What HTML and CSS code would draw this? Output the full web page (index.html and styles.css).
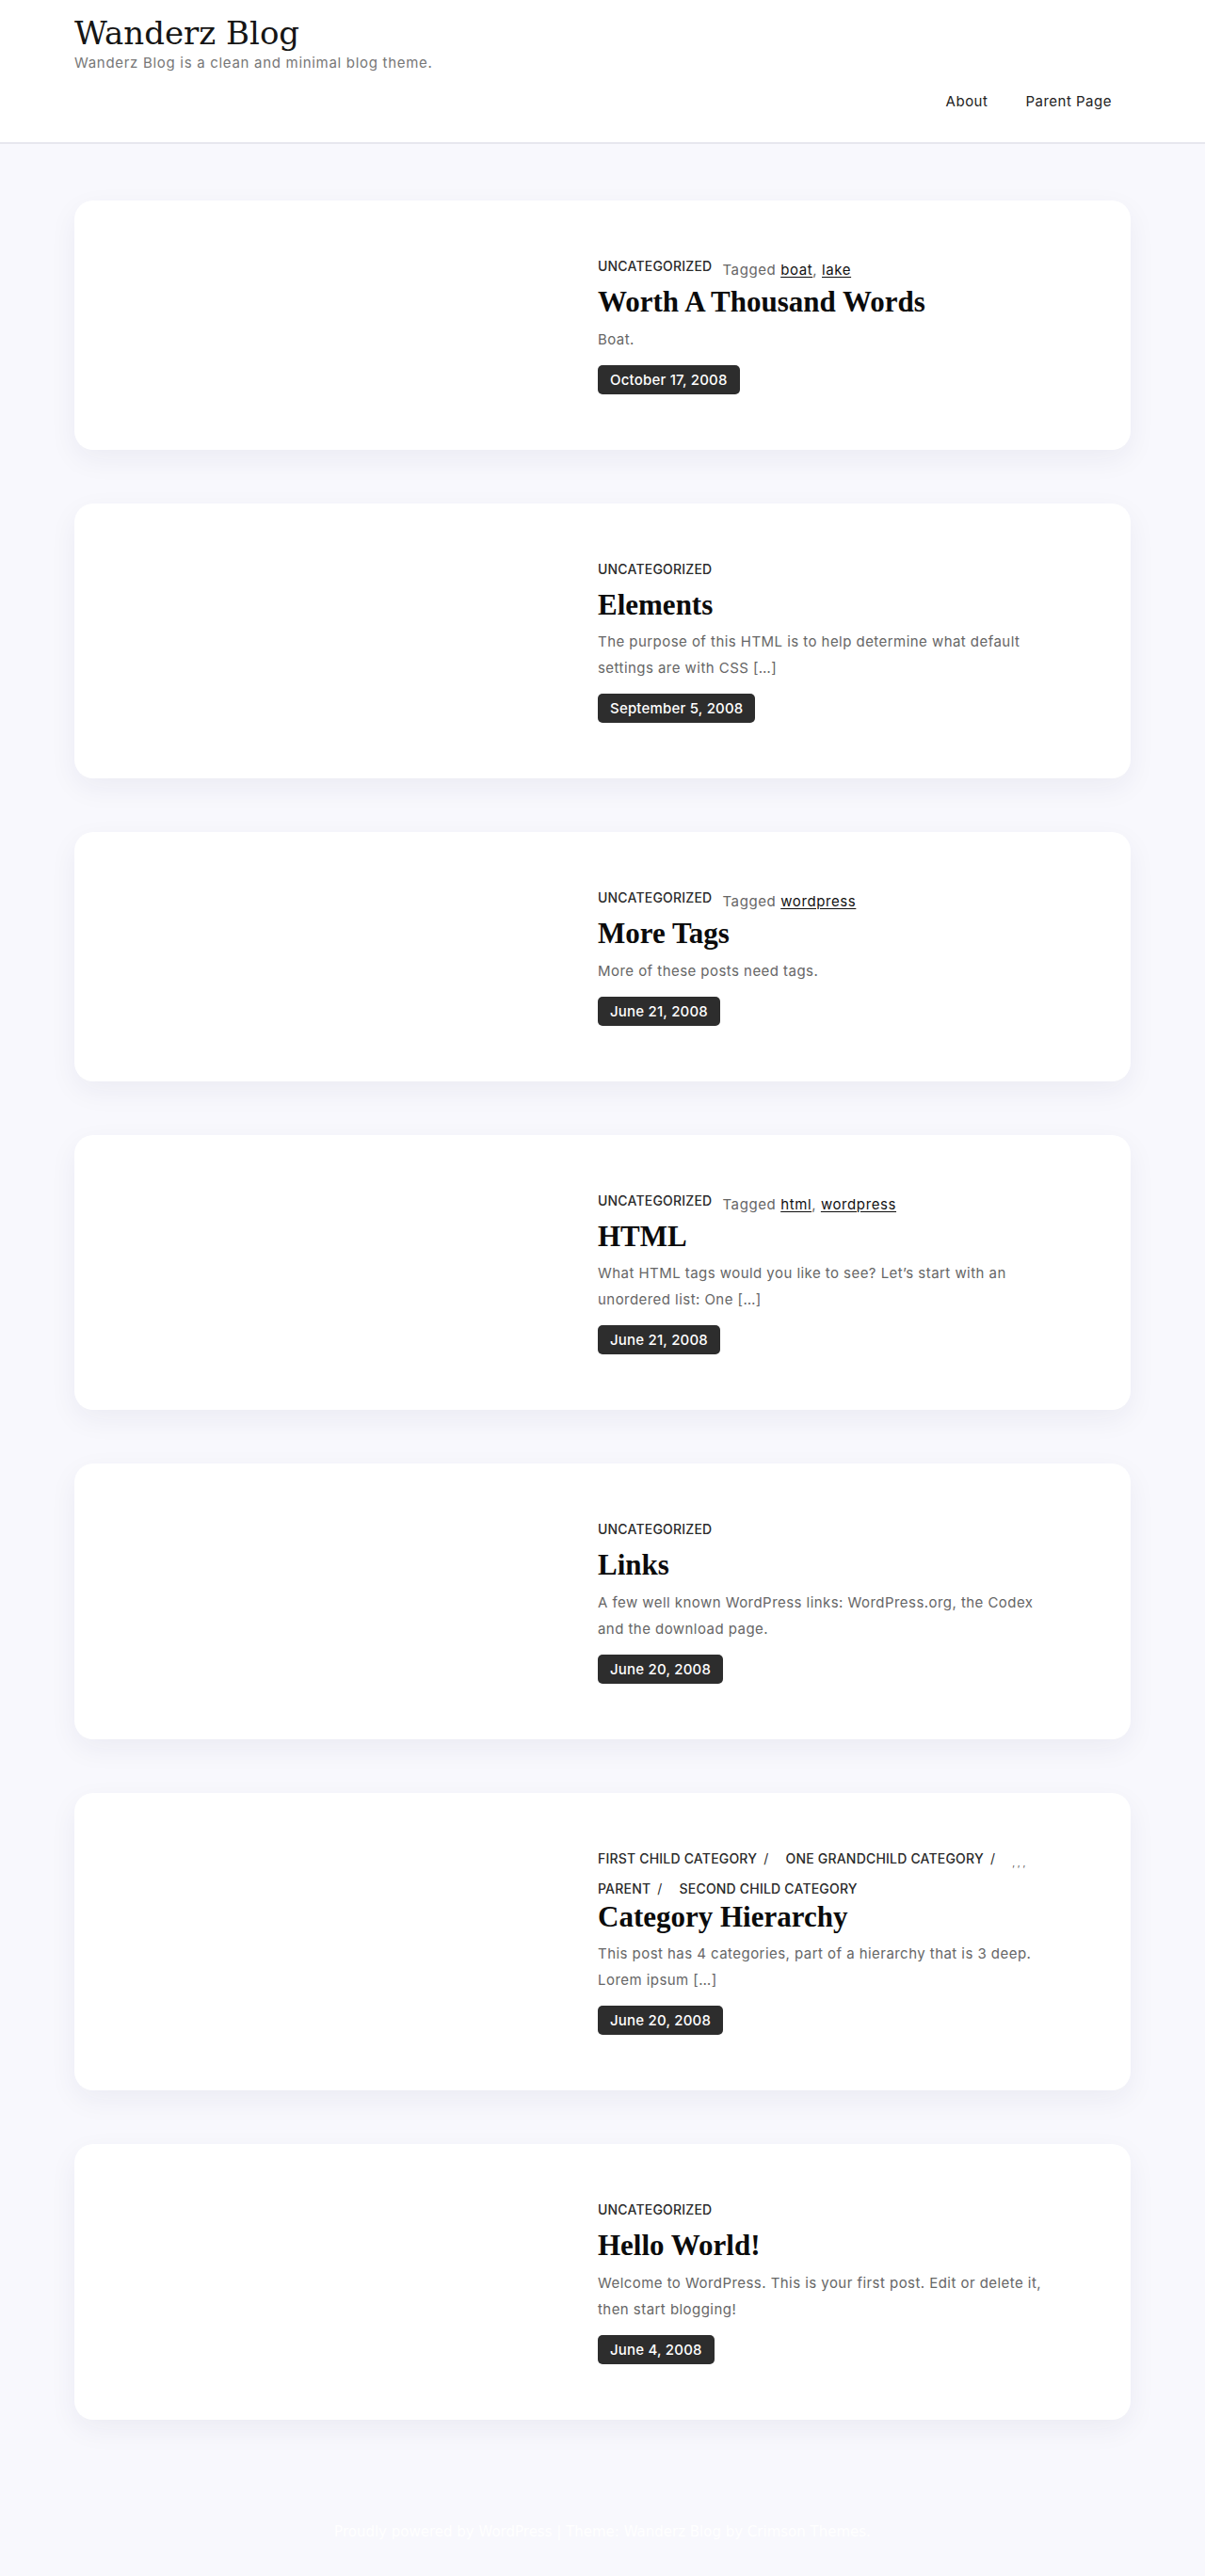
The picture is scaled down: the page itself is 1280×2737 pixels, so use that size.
FILE: index.html
```html
<!DOCTYPE html>
<html lang="en">
<head>
<meta charset="utf-8">
<title>Wanderz Blog</title>
<link rel="stylesheet" href="styles.css">
</head>
<body>
<header class="site-header">
  <div class="container header-inner">
    <div class="branding">
      <p class="site-title"><a href="#">Wanderz Blog</a></p>
      <p class="site-desc">Wanderz Blog is a clean and minimal blog theme.</p>
    </div>
    <nav class="main-nav">
      <ul>
        <li><a href="#">About</a></li>
        <li><a href="#">Parent Page</a></li>
      </ul>
    </nav>
  </div>
</header>

<main class="container main">
  <article class="post">
    <div class="post-thumb"></div>
    <div class="post-body">
      <div class="meta">
        <div class="cats"><a href="#">Uncategorized</a></div>
        <span class="tags">Tagged <a href="#">boat</a>, <a href="#">lake</a></span>
      </div>
      <h2 class="entry-title"><a href="#">Worth A Thousand Words</a></h2>
      <p class="excerpt">Boat.</p>
      <div class="posted-on"><a class="date-badge" href="#">October 17, 2008</a></div>
    </div>
  </article>

  <article class="post">
    <div class="post-thumb"></div>
    <div class="post-body">
      <div class="meta">
        <div class="cats"><a href="#">Uncategorized</a></div>
      </div>
      <h2 class="entry-title"><a href="#">Elements</a></h2>
      <p class="excerpt">The purpose of this HTML is to help determine what default settings are with CSS […]</p>
      <div class="posted-on"><a class="date-badge" href="#">September 5, 2008</a></div>
    </div>
  </article>

  <article class="post">
    <div class="post-thumb"></div>
    <div class="post-body">
      <div class="meta">
        <div class="cats"><a href="#">Uncategorized</a></div>
        <span class="tags">Tagged <a href="#">wordpress</a></span>
      </div>
      <h2 class="entry-title"><a href="#">More Tags</a></h2>
      <p class="excerpt">More of these posts need tags.</p>
      <div class="posted-on"><a class="date-badge" href="#">June 21, 2008</a></div>
    </div>
  </article>

  <article class="post">
    <div class="post-thumb"></div>
    <div class="post-body">
      <div class="meta">
        <div class="cats"><a href="#">Uncategorized</a></div>
        <span class="tags">Tagged <a href="#">html</a>, <a href="#">wordpress</a></span>
      </div>
      <h2 class="entry-title"><a href="#">HTML</a></h2>
      <p class="excerpt">What HTML tags would you like to see? Let’s start with an unordered list: One […]</p>
      <div class="posted-on"><a class="date-badge" href="#">June 21, 2008</a></div>
    </div>
  </article>

  <article class="post">
    <div class="post-thumb"></div>
    <div class="post-body">
      <div class="meta">
        <div class="cats"><a href="#">Uncategorized</a></div>
      </div>
      <h2 class="entry-title"><a href="#">Links</a></h2>
      <p class="excerpt">A few well known WordPress links: WordPress.org, the Codex and the download page.</p>
      <div class="posted-on"><a class="date-badge" href="#">June 20, 2008</a></div>
    </div>
  </article>

  <article class="post">
    <div class="post-thumb"></div>
    <div class="post-body">
      <div class="meta">
        <div class="cats">
          <a href="#">First Child Category</a><span class="sep">/</span>
          <a href="#">One Grandchild Category</a><span class="sep">/</span>
          <span class="empty-sep">, , ,</span>
          <a href="#">Parent</a><span class="sep">/</span>
          <a href="#">Second Child Category</a>
        </div>
      </div>
      <h2 class="entry-title"><a href="#">Category Hierarchy</a></h2>
      <p class="excerpt">This post has 4 categories, part of a hierarchy that is 3 deep. Lorem ipsum […]</p>
      <div class="posted-on"><a class="date-badge" href="#">June 20, 2008</a></div>
    </div>
  </article>

  <article class="post">
    <div class="post-thumb"></div>
    <div class="post-body">
      <div class="meta">
        <div class="cats"><a href="#">Uncategorized</a></div>
      </div>
      <h2 class="entry-title"><a href="#">Hello World!</a></h2>
      <p class="excerpt">Welcome to WordPress. This is your first post. Edit or delete it, then start blogging!</p>
      <div class="posted-on"><a class="date-badge" href="#">June 4, 2008</a></div>
    </div>
  </article>
</main>

<footer class="site-footer">
  <p class="site-info">Proudly powered by WordPress | Theme: Wanderz Blog by Crimson Themes.</p>
</footer>
</body>
</html>
```
FILE: styles.css
```css
* {
  box-sizing: border-box;
}

body {
  margin: 0;
  background: #f8f8fd;
  font-family: Inter, "DejaVu Sans", sans-serif;
  color: #222;
}

a {
  color: inherit;
  text-decoration: none;
}

.container {
  width: 1122px;
  margin: 0 auto;
}

/* Header */
.site-header {
  background: #fff;
  border-bottom: 2px solid #e7e7ee;
}

.header-inner {
  padding: 15px 0 31px;
}

.site-title {
  margin: 0;
  font: 400 34px/40px "DejaVu Serif", serif;
  color: #151515;
}

.site-desc {
  margin: 0;
  font-size: 15px;
  line-height: 24px;
  letter-spacing: 0.7px;
  color: #777;
}

.main-nav {
  display: flex;
  justify-content: flex-end;
  margin-top: 17px;
}

.main-nav ul {
  display: flex;
  list-style: none;
  margin: 0;
  padding: 0;
}

.main-nav a {
  display: block;
  padding: 0 20px;
  font-size: 15px;
  line-height: 24px;
  letter-spacing: 0.5px;
  color: #222;
}

/* Posts */
.main {
  padding-top: 60px;
}

.post {
  display: grid;
  grid-template-columns: 556px 1fr;
  background: #fff;
  border-radius: 20px;
  box-shadow: 0 10px 30px rgba(30, 30, 90, 0.06);
  margin-bottom: 57px;
}

.post-body {
  padding: 60px 94px 59px 0;
}

.meta {
  display: flex;
  flex-wrap: wrap;
  align-items: flex-start;
  column-gap: 11px;
  min-height: 28px;
}

.cats {
  display: flex;
  flex-wrap: wrap;
  align-items: flex-start;
  row-gap: 8px;
  font-size: 14px;
  font-weight: 500;
  line-height: 20px;
  letter-spacing: 0.2px;
  text-transform: uppercase;
  color: #2a2a2a;
}

.sep {
  margin: 0 18px 0 7px;
  font-weight: 400;
}

.empty-sep {
  margin: 4px 0 0 0;
  font-size: 10px;
  font-weight: 400;
  letter-spacing: 0;
  color: #555;
}

.tags {
  font-size: 15px;
  line-height: 28px;
  letter-spacing: 0.6px;
  color: #666;
}

.tags a {
  color: #111;
  text-decoration: underline;
  text-underline-offset: 2px;
}

.entry-title {
  margin: 0;
  font: 700 31px/40px "Liberation Serif", serif;
  color: #0b0b0b;
}

.excerpt {
  margin: 5.5px 0 0;
  font-size: 15px;
  line-height: 28px;
  letter-spacing: 0.45px;
  color: #666;
}

.posted-on {
  display: flex;
  margin-top: 13px;
}

.date-badge {
  background: #2d2d2d;
  color: #fff;
  font-size: 15px;
  font-weight: 500;
  line-height: 19px;
  letter-spacing: 0.2px;
  padding: 6px 13px;
  border-radius: 5px;
}

/* Footer */
.site-footer {
  padding: 50px 0 40px;
  text-align: center;
}

.site-info {
  margin: 0;
  font: 400 15px/24px "DejaVu Sans", sans-serif;
  color: #fff;
}
```
